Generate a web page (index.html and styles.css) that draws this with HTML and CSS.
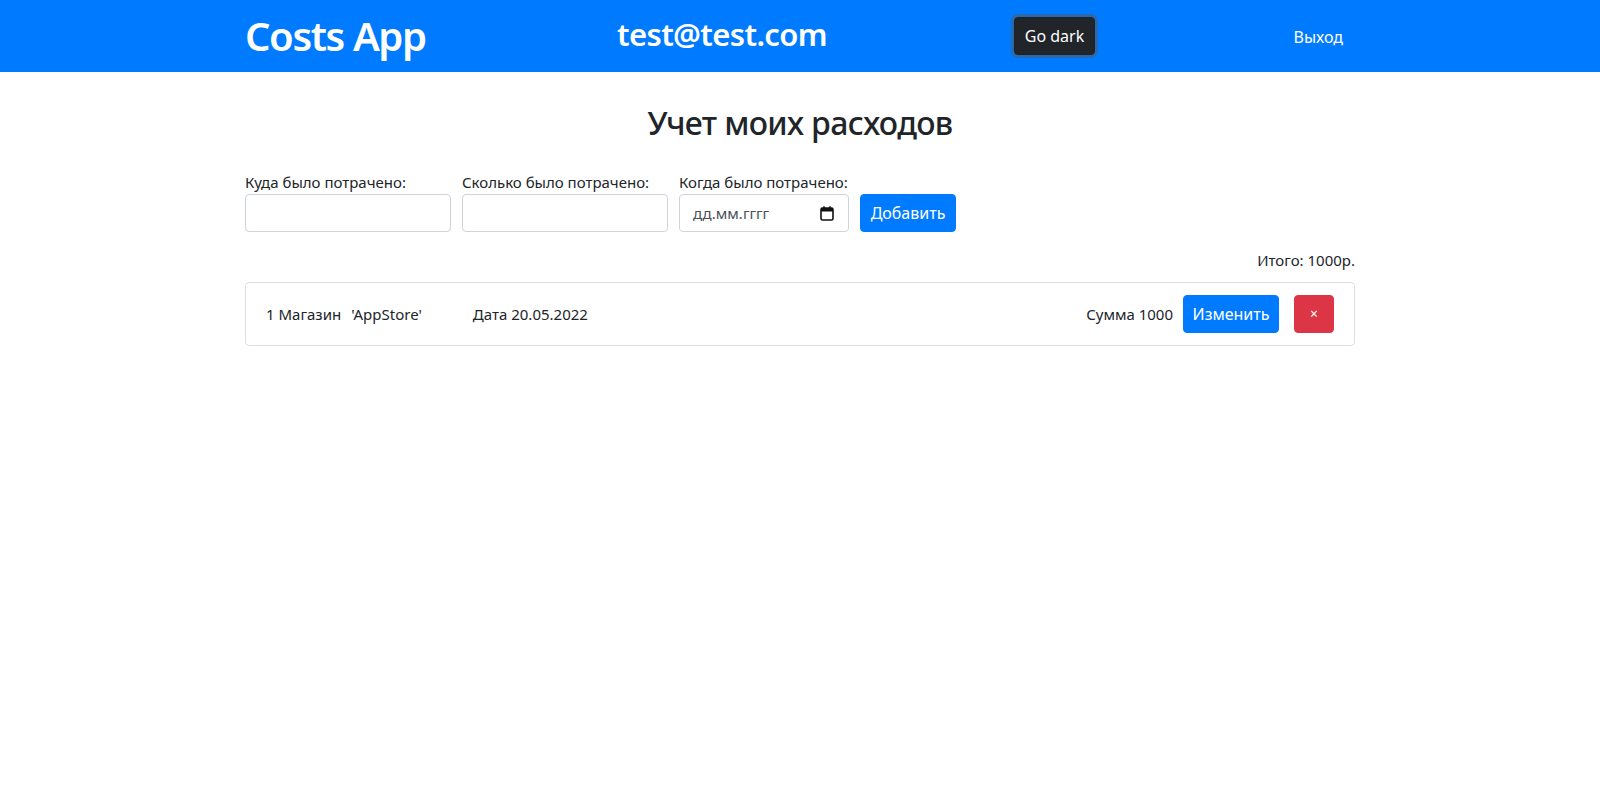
FILE: index.html
```html
<!DOCTYPE html>
<html lang="ru">
<head>
<meta charset="utf-8">
<title>Costs App</title>
<link rel="stylesheet" href="styles.css">
</head>
<body>
<nav class="navbar">
  <div class="container nav-inner">
    <h1 class="brand">Costs App</h1>
    <h3 class="user">test@test.com</h3>
    <button class="btn btn-dark btn-focus" type="button">Go dark</button>
    <a class="nav-link" href="#">Выход</a>
  </div>
</nav>
<main class="container page">
  <h2 class="title">Учет моих расходов</h2>
  <form class="cost-form">
    <div class="field">
      <label class="label">Куда было потрачено:</label>
      <input class="input input-wide" type="text">
    </div>
    <div class="field">
      <label class="label">Сколько было потрачено:</label>
      <input class="input input-wide" type="text">
    </div>
    <div class="field">
      <label class="label">Когда было потрачено:</label>
      <div class="input input-date">
        <span class="date-ph">дд.мм.гггг</span>
        <svg class="cal" width="14" height="15" viewBox="0 0 14 15" aria-hidden="true">
          <rect x="1" y="2" width="12" height="12" rx="1.5" fill="none" stroke="#111" stroke-width="1.6"/>
          <rect x="1" y="2" width="12" height="3.5" fill="#111"/>
          <rect x="3.2" y="0.3" width="1.6" height="3" fill="#111"/>
          <rect x="9.2" y="0.3" width="1.6" height="3" fill="#111"/>
        </svg>
      </div>
    </div>
    <button class="btn btn-primary add-btn" type="button">Добавить</button>
  </form>
  <div class="total">Итого: 1000р.</div>
  <ul class="list">
    <li class="item">
      <div class="item-left">
        <span class="item-name">1 Магазин</span>
        <span class="item-shop">'AppStore'</span>
        <span class="item-date">Дата 20.05.2022</span>
      </div>
      <div class="item-right">
        <span class="item-sum">Сумма 1000</span>
        <button class="btn btn-primary" type="button">Изменить</button>
        <button class="btn btn-danger btn-del" type="button">×</button>
      </div>
    </li>
  </ul>
</main>
</body>
</html>
```
FILE: styles.css
```css
* { box-sizing: border-box; }

body {
  margin: 0;
  font-family: "Noto Sans", "Open Sans", sans-serif;
  font-size: 16px;
  line-height: 1.5;
  color: #212529;
  background: #fff;
}

.container {
  width: 1140px;
  margin: 0 auto;
  padding: 0 15px;
}

.navbar {
  background: #007bff;
  height: 72px;
}

.nav-inner {
  height: 72px;
  display: flex;
  align-items: center;
}

.brand {
  flex: 0 0 372px;
  margin: 0;
  font-size: 40px;
  font-weight: 600;
  line-height: 48px;
  color: #fff;
  letter-spacing: -0.035em;
}

.user {
  flex: 0 0 397px;
  margin: 0 0 4px 0;
  font-size: 31px;
  font-weight: 600;
  line-height: 36px;
  color: #fff;
  letter-spacing: -0.02em;
}

.nav-link {
  margin-left: auto;
  color: #fff;
  text-decoration: none;
  padding: 1px 12px 0 0;
  font-size: 16px;
}

.btn {
  display: inline-block;
  font-family: inherit;
  font-size: 16px;
  line-height: 24px;
  padding: 6px 12px;
  border: 1px solid transparent;
  border-radius: 4px;
  color: #fff;
  cursor: pointer;
}

.btn-dark {
  background: #212529;
  border-color: #1d2124;
  width: 81px;
  padding: 6px 0;
}

.btn-focus {
  box-shadow: 0 0 0 3px rgba(82, 88, 93, 0.5);
}

.btn-primary {
  background: #007bff;
  border-color: #007bff;
}

.btn-danger {
  background: #dc3545;
  border-color: #dc3545;
}

.page {
  padding-top: 32px;
}

.title {
  margin: 0;
  text-align: center;
  font-size: 32px;
  font-weight: 500;
  line-height: 38.4px;
  letter-spacing: -0.02em;
}

.cost-form {
  margin-top: 28px;
  display: flex;
  align-items: flex-end;
  gap: 11px;
}

.field {
  display: flex;
  flex-direction: column;
}

.label {
  font-size: 15px;
  line-height: 24px;
  white-space: nowrap;
}

.input {
  height: 38px;
  border: 1px solid #ced4da;
  border-radius: 4px;
  background: #fff;
  font-family: inherit;
  font-size: 16px;
  padding: 6px 12px;
}

.input-wide { width: 206px; }

.input-date {
  width: 170px;
  display: flex;
  align-items: center;
  justify-content: space-between;
  padding: 6px 14px 6px 13px;
}

.date-ph {
  color: #495057;
  font-size: 15px;
  line-height: 24px;
}

.cal { display: block; }

.add-btn {
  height: 38px;
  width: 96px;
  padding: 6px 0;
}

.total {
  margin-top: 16px;
  text-align: right;
  font-size: 15px;
  line-height: 24px;
}

.list {
  list-style: none;
  margin: 10px 0 0;
  padding: 0;
}

.item {
  display: flex;
  align-items: center;
  justify-content: space-between;
  border: 1px solid rgba(0, 0, 0, 0.125);
  border-radius: 4px;
  padding: 12px 20px;
  font-size: 15px;
}

.item-left {
  display: flex;
  align-items: center;
}

.item-shop { margin-left: 10px; }
.item-date { margin-left: 51px; }

.item-right {
  display: flex;
  align-items: center;
}

.item-right .btn-primary {
  margin-left: 10px;
  width: 96px;
  padding: 6px 0;
}

.btn-del {
  margin-left: 15px;
  width: 40px;
  padding: 6px 0;
  font-size: 14px;
}
```
